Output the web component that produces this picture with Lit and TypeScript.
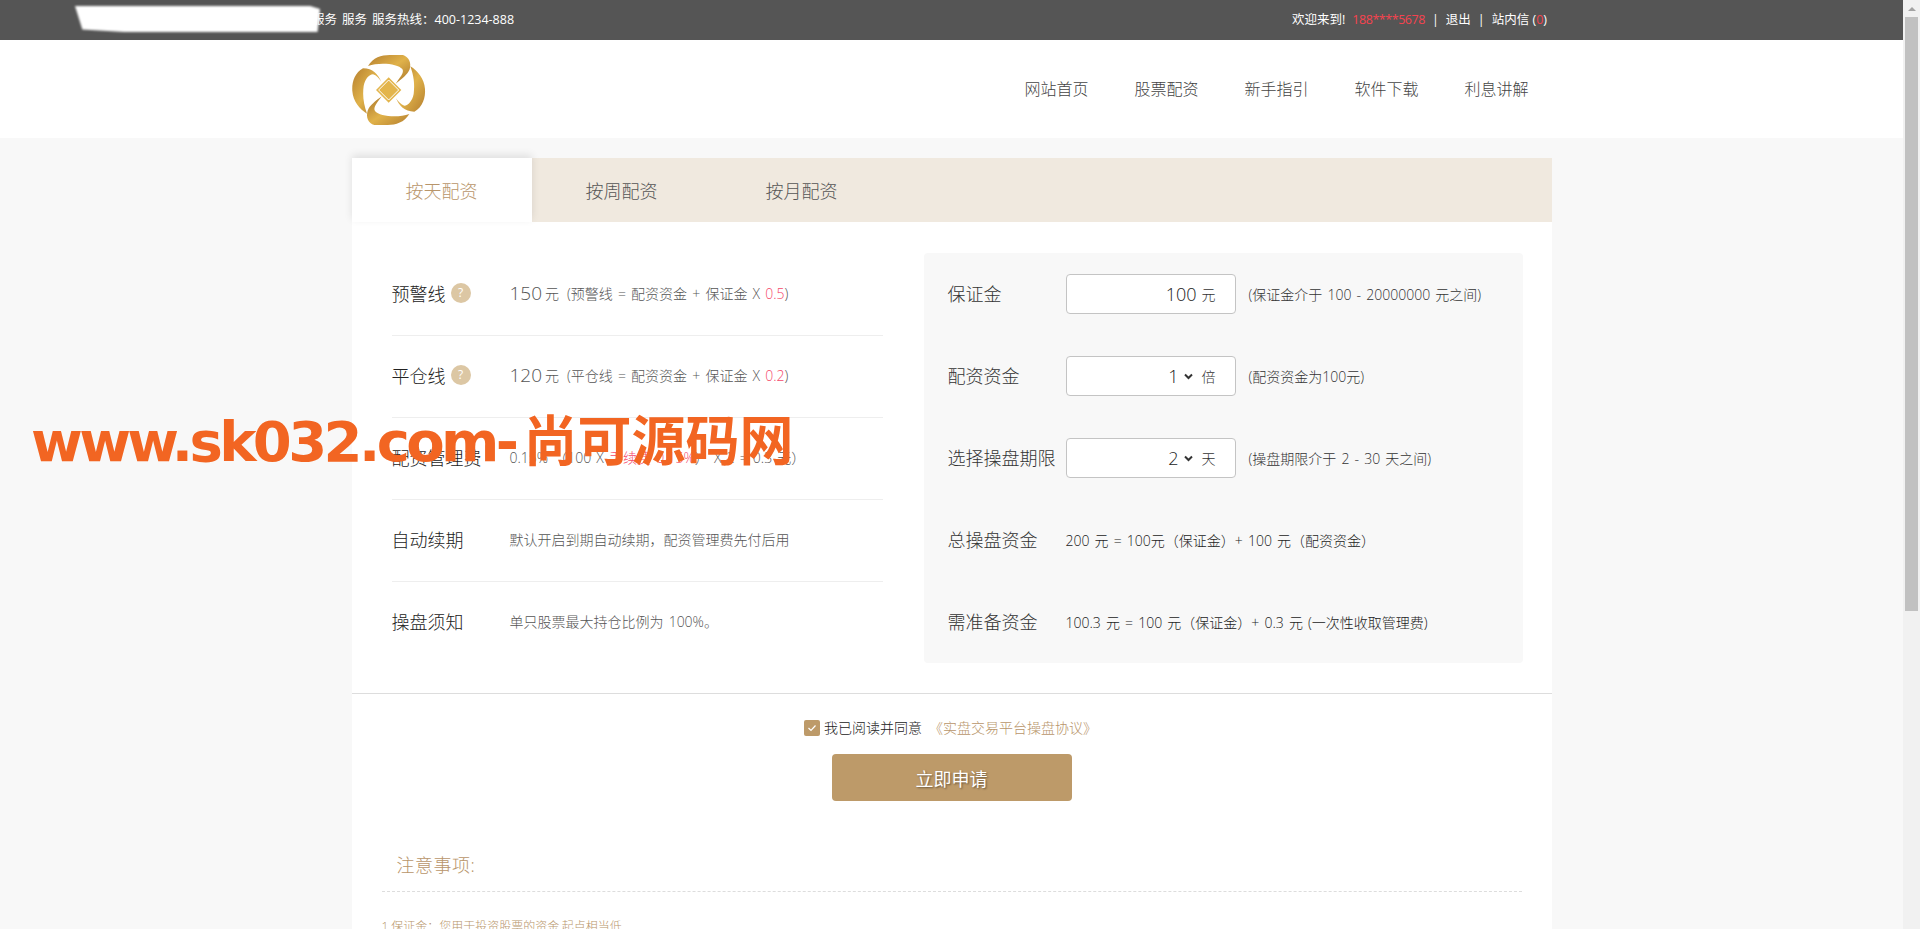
import { LitElement, css, html, svg } from "lit";
import { customElement } from "lit/decorators.js";

const navItems = ["网站首页", "股票配资", "新手指引", "软件下载", "利息讲解"];
const tabs = ["按天配资", "按周配资", "按月配资"];

@customElement("app-root")
export class AppRoot extends LitElement {
  static styles = css`
    :host {
      display: flex;
      height: 929px;
      overflow: hidden;
      position: relative;
      background: #f8f8f8;
      font-family: "Open Sans", "Noto Sans CJK SC", sans-serif;
      font-size: 14px;
      font-weight: 300;
      color: #333;
    }
    .page {
      flex: 1;
      min-width: 0;
    }
    .scrollbar {
      width: 17px;
      flex: none;
      background: #f1f1f1;
      display: flex;
      flex-direction: column;
      align-items: center;
    }
    .scroll-up {
      width: 0;
      height: 0;
      margin: 7px 0 7px;
      border-left: 4px solid transparent;
      border-right: 4px solid transparent;
      border-bottom: 4px solid #a3a3a3;
    }
    .scroll-thumb {
      width: 13px;
      height: 594px;
      margin-top: -1px;
      background: #c1c1c1;
    }
    .topbar {
      height: 40px;
      background: #555;
      color: #fff;
      font-size: 12.5px;
      font-weight: 400;
      line-height: 40px;
      display: flex;
      justify-content: space-between;
      padding: 0 356px 0 312px;
      white-space: nowrap;
    }
    .topbar .left span {
      margin-right: 5px;
    }
    .topbar .right {
      display: flex;
      gap: 7px;
    }
    .red {
      color: #f5434f;
    }
    .phone {
      letter-spacing: -0.45px;
    }
    .smear {
      position: absolute;
      left: 75px;
      top: 6px;
      width: 245px;
      height: 26px;
      filter: blur(1.2px);
    }
    .smear div {
      height: 100%;
      background: #fff;
      clip-path: polygon(0 0, 96% 0, 100% 12%, 99% 100%, 20% 100%, 3% 90%);
    }
    .header {
      height: 98px;
      background: #fff;
    }
    .inner {
      width: 1200px;
      margin: 0 auto;
      display: flex;
      align-items: center;
      justify-content: space-between;
      height: 100%;
    }
    .logo {
      width: 74px;
      height: 70px;
      display: block;
      margin-top: 1px;
    }
    .nav {
      display: flex;
      font-size: 16px;
      color: #444;
      padding-bottom: 2px;
    }
    .nav a {
      padding: 0 23px;
    }
    .card {
      width: 1200px;
      margin: 20px auto 0;
      background: #fff;
    }
    .tabs {
      display: flex;
      height: 64px;
      background: #f0e9df;
    }
    .tab {
      width: 180px;
      line-height: 66px;
      text-align: center;
      font-size: 18px;
      color: #555;
    }
    .tab.active {
      background: #fff;
      color: #b8956a;
      box-shadow: 0 -3px 8px rgba(0, 0, 0, 0.1);
    }
    .columns {
      display: flex;
      justify-content: space-between;
      padding: 31px 29px 0 40px;
      word-spacing: 1.5px;
    }
    .info {
      width: 491px;
      margin-top: 1px;
    }
    .info-row {
      height: 77px;
      padding-bottom: 4px;
      display: flex;
      align-items: center;
      border-bottom: 1px solid #eee;
      color: #555;
    }
    .info-row:last-child {
      border-bottom: 0;
    }
    .label {
      width: 118px;
      flex: none;
      font-size: 18px;
      color: #222;
      display: flex;
      align-items: center;
      gap: 5px;
    }
    .help {
      width: 20px;
      height: 20px;
      border-radius: 50%;
      background: #dcc7a4;
      color: #fff;
      font-size: 12px;
      font-weight: 400;
      line-height: 20px;
      text-align: center;
    }
    .num {
      font-size: 19px;
      color: #555;
    }
    .unit {
      margin: 0 8px 0 3px;
    }
    .pink {
      color: #f5486a;
    }
    .calc {
      width: 599px;
      height: 410px;
      background: #f8f8f8;
      border-radius: 4px;
    }
    .calc-row {
      height: 82px;
      display: flex;
      align-items: center;
      padding-left: 24px;
      box-sizing: border-box;
    }
    .calc-row .label {
      width: 118px;
      color: #333;
      margin-bottom: 2px;
    }
    .field {
      width: 170px;
      height: 40px;
      flex: none;
      box-sizing: border-box;
      border: 1px solid #c4c4c4;
      border-radius: 4px;
      background: #fff;
      display: flex;
      align-items: center;
      justify-content: flex-end;
      padding-right: 19px;
      color: #333;
    }
    .field .num {
      font-size: 18px;
      color: #222;
    }
    .field .suffix {
      margin-left: 5px;
      color: #333;
    }
    .chevron {
      width: 9px;
      height: 7px;
      margin-left: 5px;
      margin-right: 4px;
      display: block;
    }
    .hint {
      margin: 0 0 1px 13px;
      color: #333;
      white-space: nowrap;
    }
    .formula {
      color: #222;
      margin-bottom: 1px;
      white-space: nowrap;
    }
    .divider {
      height: 1px;
      margin-top: 30px;
      background: #ddd;
    }
    .agree {
      display: flex;
      justify-content: center;
      align-items: center;
      margin-top: 26px;
      height: 16px;
      line-height: 16px;
      padding-right: 2px;
      color: #222;
    }
    .check {
      width: 16px;
      height: 16px;
      margin-right: 4px;
      border-radius: 2px;
      background: #bd9a69;
      display: block;
    }
    .agree a {
      margin-left: 7px;
      color: #b8956a;
    }
    .submit {
      display: block;
      width: 240px;
      height: 47px;
      margin: 18px auto 0;
      border: 0;
      border-radius: 4px;
      background: #bd9a69;
      color: #fff;
      font: inherit;
      font-size: 18px;
      font-weight: 400;
      text-shadow: 1px 1px 2px rgba(0, 0, 0, 0.45);
    }
    .notes {
      margin: 50px 30px 0;
    }
    .notes h3 {
      margin: 0;
      padding: 0 0 12px 15px;
      height: 28px;
      line-height: 28px;
      font-size: 18px;
      font-weight: 300;
      letter-spacing: 0.5px;
      color: #b8956a;
      border-bottom: 1px dashed #ddd;
    }
    .notes p {
      margin: 25px 0 0;
      color: #b8956a;
      font-size: 12px;
      line-height: 20px;
    }
    .watermark {
      position: absolute;
      left: 31px;
      top: 400px;
      color: #f26522;
      font-family: "DejaVu Sans", "Noto Sans CJK SC", sans-serif;
      font-weight: 700;
      font-size: 56px;
      line-height: 76px;
      letter-spacing: -3.6px;
      white-space: nowrap;
    }
    .watermark span {
      font-family: "Noto Sans CJK SC", sans-serif;
      font-weight: 700;
      font-size: 54px;
      letter-spacing: 0;
      margin-left: 8px;
    }
  `;

  renderLogo() {
    const top = svg`<path d="M85 75C100 50 125 42 150 42L190 42C208 48 216 65 210 85C205 100 185 115 168 128C180 110 195 95 188 84C175 68 120 62 85 75Z" />`;
    const left = svg`<path d="M70 82C45 95 36 125 38 150C40 180 60 205 82 218C72 190 68 165 72 135C76 115 88 100 100 100C110 103 118 112 125 122C115 100 100 82 70 82Z" />`;
    return html`<svg class="logo" viewBox="38 42 220 210">
      <defs>
        <linearGradient id="gold" x1="0" y1="0" x2="1" y2="1">
          <stop offset="0" stop-color="#b57f2f" />
          <stop offset="0.5" stop-color="#e0b24a" />
          <stop offset="1" stop-color="#a9762c" />
        </linearGradient>
      </defs>
      <g fill="url(#gold)">
        ${top} ${left}
        <g transform="rotate(180 147 147)">${top} ${left}</g>
      </g>
      <path d="M147 109L185 147L147 185L109 147Z" fill="#e3b54c" />
      <path d="M147 117L177 147L147 177L117 147Z" fill="none" stroke="#fff" stroke-width="3" />
    </svg>`;
  }

  renderChevron() {
    return html`<svg class="chevron" viewBox="0 0 9 7">
      <path d="M1 1.5L4.5 5L8 1.5" fill="none" stroke="#333" stroke-width="2" />
    </svg>`;
  }

  render() {
    return html`
      <div class="page">
        <div class="topbar">
          <div class="left"><span>服务</span><span>服务</span>服务热线：400-1234-888</div>
          <div class="right">
            <span>欢迎来到!</span>
            <span class="red phone">188****5678</span>
            <span>|</span>
            <span>退出</span>
            <span>|</span>
            <span>站内信 (<span class="red">0</span>)</span>
          </div>
        </div>
        <div class="header">
          <div class="inner">
            ${this.renderLogo()}
            <nav class="nav">${navItems.map((n) => html`<a>${n}</a>`)}</nav>
          </div>
        </div>
        <div class="card">
          <div class="tabs">
            ${tabs.map((t, i) => html`<div class="tab ${i === 0 ? "active" : ""}">${t}</div>`)}
          </div>
          <div class="columns">
            <div class="info">
              <div class="info-row">
                <div class="label">预警线<span class="help">?</span></div>
                <span class="num">150</span><span class="unit">元</span>
                <span>(预警线 = 配资资金 + 保证金 X <span class="pink">0.5</span>)</span>
              </div>
              <div class="info-row">
                <div class="label">平仓线<span class="help">?</span></div>
                <span class="num">120</span><span class="unit">元</span>
                <span>(平仓线 = 配资资金 + 保证金 X <span class="pink">0.2</span>)</span>
              </div>
              <div class="info-row">
                <div class="label">配资管理费</div>
                <span>0.15% （100 X <span class="pink">手续费 0.15%</span>） X 2 = 0.3 元）</span>
              </div>
              <div class="info-row">
                <div class="label">自动续期</div>
                <span>默认开启到期自动续期，配资管理费先付后用</span>
              </div>
              <div class="info-row">
                <div class="label">操盘须知</div>
                <span>单只股票最大持仓比例为 100%。</span>
              </div>
            </div>
            <div class="calc">
              <div class="calc-row">
                <div class="label">保证金</div>
                <div class="field"><span class="num">100</span><span class="suffix">元</span></div>
                <span class="hint">(保证金介于 100 - 20000000 元之间)</span>
              </div>
              <div class="calc-row">
                <div class="label">配资资金</div>
                <div class="field"><span class="num">1</span>${this.renderChevron()}<span class="suffix">倍</span></div>
                <span class="hint">(配资资金为100元)</span>
              </div>
              <div class="calc-row">
                <div class="label">选择操盘期限</div>
                <div class="field"><span class="num">2</span>${this.renderChevron()}<span class="suffix">天</span></div>
                <span class="hint">(操盘期限介于 2 - 30 天之间)</span>
              </div>
              <div class="calc-row">
                <div class="label">总操盘资金</div>
                <span class="formula">200 元 = 100元（保证金）+ 100 元（配资资金）</span>
              </div>
              <div class="calc-row">
                <div class="label">需准备资金</div>
                <span class="formula">100.3 元 = 100 元（保证金）+ 0.3 元 (一次性收取管理费)</span>
              </div>
            </div>
          </div>
          <div class="divider"></div>
          <div class="agree">
            <svg class="check" viewBox="0 0 16 16">
              <path d="M4.5 8L7 10.5L11.5 5.5" fill="none" stroke="#fff" stroke-width="1.2" />
            </svg>
            我已阅读并同意
            <a>《实盘交易平台操盘协议》</a>
          </div>
          <button class="submit">立即申请</button>
          <div class="notes">
            <h3>注意事项:</h3>
            <p>1.保证金：您用于投资股票的资金,起点相当低</p>
          </div>
        </div>
      </div>
      <div class="scrollbar">
        <div class="scroll-up"></div>
        <div class="scroll-thumb"></div>
      </div>
      <div class="smear"><div></div></div>
      <div class="watermark">www.sk032.com-<span>尚可源码网</span></div>
    `;
  }
}
